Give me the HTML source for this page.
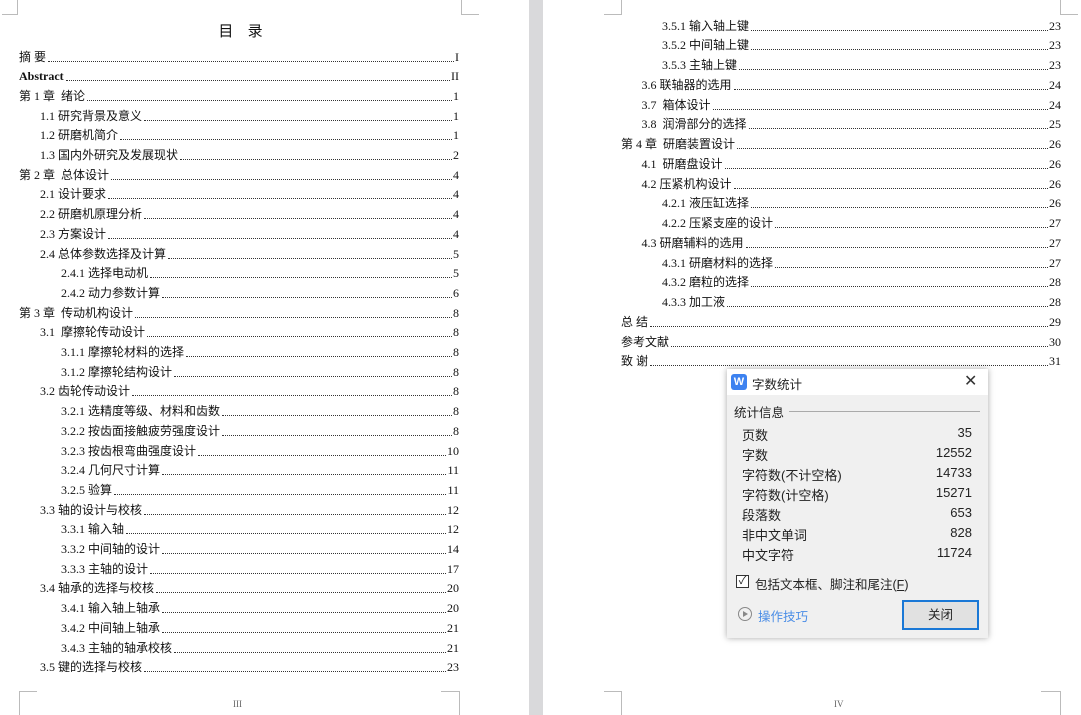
<!DOCTYPE html>
<html><head><meta charset="utf-8">
<style>
*{margin:0;padding:0;box-sizing:border-box}
body{width:1081px;height:715px;overflow:hidden;background:#fff;position:relative;font-family:"Liberation Serif","Noto Sans CJK SC",serif;font-size:12px;color:#111}
.gap{position:absolute;left:529px;top:0;width:14px;height:715px;background:#d9d9db}
.r{position:absolute;height:16px;line-height:16px;display:flex;white-space:nowrap}
.r .d{flex:1;border-bottom:1px dotted #333;margin:0 1px 3px 2px}
.m{position:absolute;border-color:#bbb;border-style:solid;border-width:0}
.dlg{position:absolute;left:727px;top:369px;width:261px;height:269px;background:#f0f0f0;box-shadow:0 0 6px rgba(0,0,0,.35);font-family:"Liberation Sans","Noto Sans CJK SC",sans-serif;font-size:12.5px;color:#222}
.dlg .tb{height:26px;background:#fff;position:relative}
.dlg .row{position:absolute;left:15px;width:230px;display:flex;justify-content:space-between;font-size:13px}
</style></head><body>
<div class="gap"></div>
<div class="m" style="left:2px;top:0;width:16px;height:15px;border-right-width:1px;border-bottom-width:1px"></div>
<div class="m" style="left:461px;top:0;width:18px;height:15px;border-left-width:1px;border-bottom-width:1px"></div>
<div class="m" style="left:19px;top:691px;width:18px;height:24px;border-left-width:1px;border-top-width:1px"></div>
<div class="m" style="left:441px;top:691px;width:19px;height:24px;border-right-width:1px;border-top-width:1px"></div>
<div class="m" style="left:604px;top:0;width:18px;height:15px;border-right-width:1px;border-bottom-width:1px"></div>
<div class="m" style="left:1060px;top:0;width:18px;height:15px;border-left-width:1px;border-bottom-width:1px"></div>
<div class="m" style="left:604px;top:691px;width:18px;height:24px;border-right-width:1px;border-top-width:1px"></div>
<div class="m" style="left:1041px;top:691px;width:20px;height:24px;border-right-width:1px;border-top-width:1px"></div>
<div style="position:absolute;left:233px;top:699px;font-size:9px;color:#666">III</div>
<div style="position:absolute;left:834px;top:699px;font-size:9px;color:#666">IV</div>
<div style="position:absolute;left:0;width:481px;top:20px;text-align:center;font-family:'Liberation Sans','Noto Sans CJK SC',sans-serif;font-size:15px;letter-spacing:5px;padding-left:5px">目 录</div>
<div id="L"></div>
<script>
var L=[[0,"摘 要","I"],[0,"<b>Abstract</b>","II"],[0,"第 1 章&nbsp; 绪论","1"],[1,"1.1 研究背景及意义","1"],[1,"1.2 研磨机简介","1"],[1,"1.3 国内外研究及发展现状","2"],[0,"第 2 章&nbsp; 总体设计","4"],[1,"2.1 设计要求","4"],[1,"2.2 研磨机原理分析","4"],[1,"2.3 方案设计","4"],[1,"2.4 总体参数选择及计算","5"],[2,"2.4.1 选择电动机","5"],[2,"2.4.2 动力参数计算","6"],[0,"第 3 章&nbsp; 传动机构设计","8"],[1,"3.1&nbsp; 摩擦轮传动设计","8"],[2,"3.1.1 摩擦轮材料的选择","8"],[2,"3.1.2 摩擦轮结构设计","8"],[1,"3.2 齿轮传动设计","8"],[2,"3.2.1 选精度等级、材料和齿数","8"],[2,"3.2.2 按齿面接触疲劳强度设计","8"],[2,"3.2.3 按齿根弯曲强度设计","10"],[2,"3.2.4 几何尺寸计算","11"],[2,"3.2.5 验算","11"],[1,"3.3 轴的设计与校核","12"],[2,"3.3.1 输入轴","12"],[2,"3.3.2 中间轴的设计","14"],[2,"3.3.3 主轴的设计","17"],[1,"3.4 轴承的选择与校核","20"],[2,"3.4.1 输入轴上轴承","20"],[2,"3.4.2 中间轴上轴承","21"],[2,"3.4.3 主轴的轴承校核","21"],[1,"3.5 键的选择与校核","23"]];
var R=[[2,"3.5.1 输入轴上键","23"],[2,"3.5.2 中间轴上键","23"],[2,"3.5.3 主轴上键","23"],[1,"3.6 联轴器的选用","24"],[1,"3.7&nbsp; 箱体设计","24"],[1,"3.8&nbsp; 润滑部分的选择","25"],[0,"第 4 章&nbsp; 研磨装置设计","26"],[1,"4.1&nbsp; 研磨盘设计","26"],[1,"4.2 压紧机构设计","26"],[2,"4.2.1 液压缸选择","26"],[2,"4.2.2 压紧支座的设计","27"],[1,"4.3 研磨辅料的选用","27"],[2,"4.3.1 研磨材料的选择","27"],[2,"4.3.2 磨粒的选择","28"],[2,"4.3.3 加工液","28"],[0,"总 结","29"],[0,"参考文献","30"],[0,"致 谢","31"]];
var h="";
L.forEach(function(e,i){var x=19+e[0]*21;h+='<div class="r" style="left:'+x+'px;width:'+(459-x)+'px;top:'+(48.5+i*19.7)+'px"><span>'+e[1]+'</span><span class="d"></span><span>'+e[2]+'</span></div>';});
R.forEach(function(e,i){var x=621+e[0]*20.5;h+='<div class="r" style="left:'+x+'px;width:'+(1061-x)+'px;top:'+(17.5+i*19.76)+'px"><span>'+e[1]+'</span><span class="d"></span><span>'+e[2]+'</span></div>';});
document.getElementById("L").innerHTML=h;
</script>
<div class="dlg">
 <div class="tb">
  <div style="position:absolute;left:4px;top:5px;width:16px;height:16px;background:#3d82f0;border-radius:3px;color:#fff;font-size:11px;font-weight:bold;text-align:center;line-height:16px">W</div>
  <div style="position:absolute;left:25px;top:5px;font-size:12.5px">字数统计</div>
  <div style="position:absolute;left:237px;top:2px;font-size:16px;color:#333">✕</div>
 </div>
 <div style="position:absolute;left:7px;top:33px">统计信息</div>
 <div style="position:absolute;left:62px;top:42px;width:191px;height:1px;background:#aaa"></div>
 <div class="row" style="top:56px"><span>页数</span><span>35</span></div>
 <div class="row" style="top:76px"><span>字数</span><span>12552</span></div>
 <div class="row" style="top:96px"><span>字符数(不计空格)</span><span>14733</span></div>
 <div class="row" style="top:116px"><span>字符数(计空格)</span><span>15271</span></div>
 <div class="row" style="top:136px"><span>段落数</span><span>653</span></div>
 <div class="row" style="top:156px"><span>非中文单词</span><span>828</span></div>
 <div class="row" style="top:176px"><span>中文字符</span><span>11724</span></div>
 <div style="position:absolute;left:9px;top:206px;width:13px;height:13px;border:1px solid #333;background:#fff;font-size:11px;line-height:11px;text-align:center">✓</div>
 <div style="position:absolute;left:28px;top:205px">包括文本框、脚注和尾注(<u>F</u>)</div>
 <div style="position:absolute;left:11px;top:238px;width:14px;height:14px;border:1px solid #888;border-radius:50%"></div>
 <div style="position:absolute;left:16px;top:242px;width:0;height:0;border-left:5px solid #888;border-top:3px solid transparent;border-bottom:3px solid transparent"></div>
 <div style="position:absolute;left:31px;top:237px;color:#4a8de6">操作技巧</div>
 <div style="position:absolute;left:175px;top:231px;width:77px;height:30px;border:2px solid #1a78d6;background:#e1e1e1;text-align:center;line-height:26px">关闭</div>
</div>
</body></html>
